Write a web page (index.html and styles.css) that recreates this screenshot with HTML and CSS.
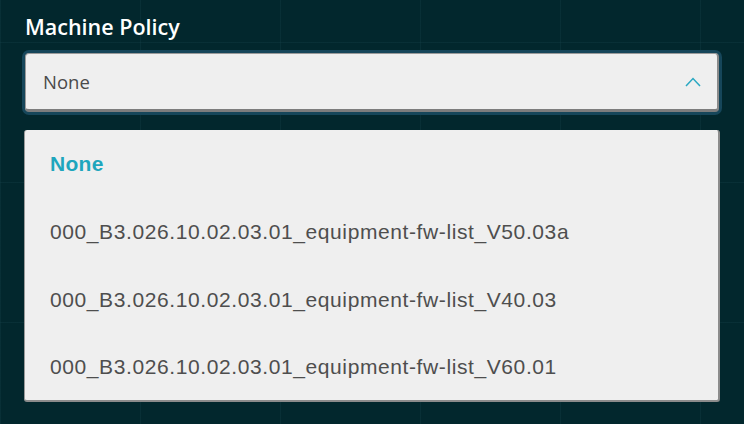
FILE: index.html
```html
<!DOCTYPE html>
<html>
<head>
<meta charset="utf-8">
<link rel="stylesheet" href="styles.css">
</head>
<body>
<div class="field">
  <label class="label">Machine Policy</label>
  <div class="select">
    <span class="value">None</span>
    <svg class="chev" width="16" height="11" viewBox="0 0 16 11"><path d="M1 10 L8 2.5 L15 10" fill="none" stroke="#2aa8c2" stroke-width="1.5"/></svg>
  </div>
  <ul class="menu">
    <li class="opt active">None</li>
    <li class="opt">000_B3.026.10.02.03.01_equipment-fw-list_V50.03a</li>
    <li class="opt">000_B3.026.10.02.03.01_equipment-fw-list_V40.03</li>
    <li class="opt">000_B3.026.10.02.03.01_equipment-fw-list_V60.01</li>
  </ul>
</div>
</body>
</html>
```
FILE: styles.css
```css
html, body {
  margin: 0;
  height: 100%;
}
body {
  background-color: #02272d;
  background-image:
    linear-gradient(to right, rgba(40,90,100,0.16) 1px, transparent 1px),
    linear-gradient(to bottom, rgba(40,90,100,0.16) 1px, transparent 1px);
  background-size: 140px 140px;
  background-position: 0 42px;
  overflow: hidden;
}
.field {
  padding: 12px 24px 0 24px;
  display: flex;
  flex-direction: column;
}
.label {
  color: #ffffff;
  font-family: "Open Sans", sans-serif;
  font-weight: 600;
  font-size: 21.5px;
  line-height: 30px;
  margin-left: 1px;
  margin-bottom: 11px;
}
.select {
  height: 59px;
  margin: 0 1px;
  box-sizing: border-box;
  background: #efefef;
  border: 1px solid #9a9a9a;
  border-bottom: 3px solid #7d7d7d;
  border-right: 2px solid #8a8a8a;
  border-radius: 4px;
  box-shadow: 0 0 0 3px #16465a;
  display: flex;
  align-items: center;
  justify-content: space-between;
  padding: 0 16px 0 17px;
}
.value {
  font-family: "Open Sans", sans-serif;
  font-size: 18.5px;
  color: #4a4a4a;
}
.chev {
  display: block;
}
.menu {
  list-style: none;
  margin: 18px 0 0 0;
  padding: 0;
  background: #efefef;
  border-radius: 3px;
  border-left: 1px solid #9a9a9a;
  border-right: 2px solid #8c8c8c;
  border-bottom: 2px solid #8c8c8c;
  width: 696px;
  box-sizing: border-box;
}
.opt {
  height: 68px;
  display: flex;
  align-items: center;
  padding-left: 25px;
  font-family: "Liberation Sans", sans-serif;
  font-size: 21px;
  letter-spacing: 0.6px;
  color: #4e4e4e;
}
.opt:last-child {
  height: 66px;
  padding-bottom: 1px;
  box-sizing: border-box;
}
.opt.active {
  color: #1ea6bd;
  font-weight: 700;
  letter-spacing: 0.3px;
}
```
